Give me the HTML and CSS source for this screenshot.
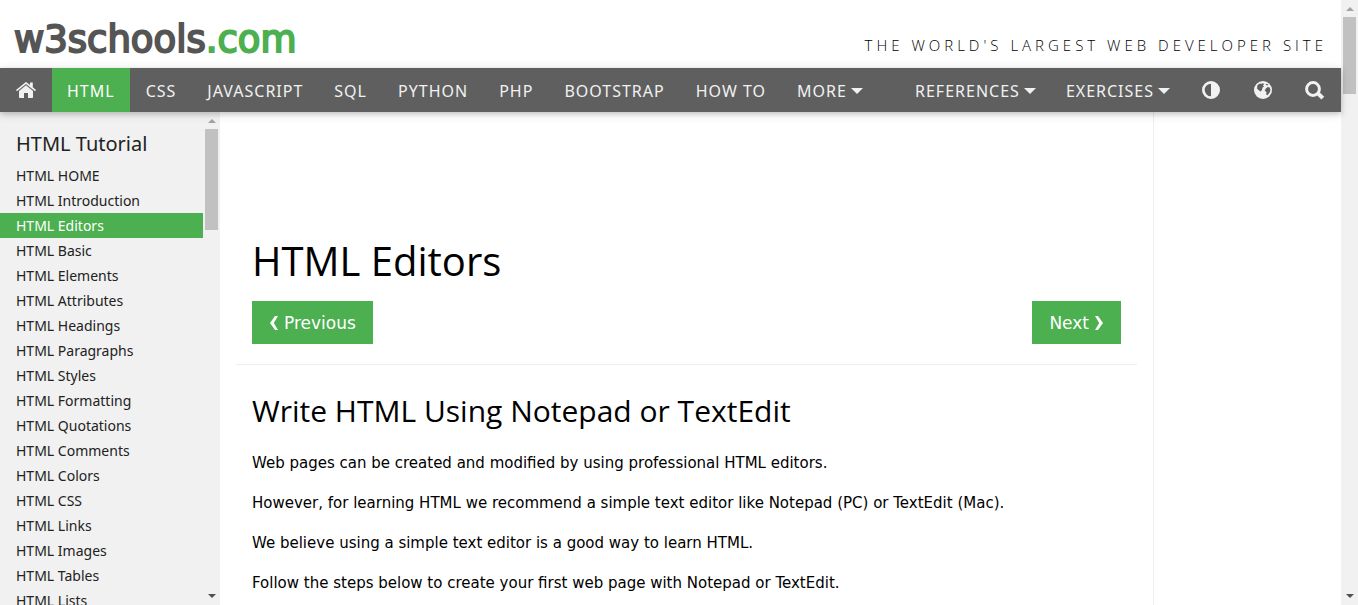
FILE: index.html
```html
<!DOCTYPE html>
<html lang="en">
<head>
<meta charset="utf-8">
<title>HTML Editors</title>
<meta name="viewport" content="width=device-width, initial-scale=1">
<link rel="stylesheet" href="styles.css">
</head>
<body>
<div class="window">
  <div class="page">
    <header class="top">
      <a class="logo" href="#">w3schools<span class="logo-dot">.com</span></a>
      <div class="tagline">THE WORLD'S LARGEST WEB DEVELOPER SITE</div>
    </header>
    <nav class="topnav">
      <a class="nav-icon" href="#" aria-label="Home"><svg width="20" height="16" viewBox="0 0 20 16"><path d="M10 3.200 3 9v6.200q0 .8.8.8H8v-5h4v5h4.200q.8 0 .8-.8V9z"/><path d="M9.200.4q.8-.6 1.600 0L14 3V.6h2.800v4.700L20 8l-1 1.200L10 1.900 1 9.200 0 8z"/></svg></a>
      <a class="active" href="#">HTML</a>
      <a href="#">CSS</a>
      <a href="#">JAVASCRIPT</a>
      <a href="#">SQL</a>
      <a href="#">PYTHON</a>
      <a href="#">PHP</a>
      <a href="#">BOOTSTRAP</a>
      <a href="#">HOW TO</a>
      <a href="#">MORE<span class="caret"></span></a>
      <div class="nav-right">
        <a href="#">REFERENCES<span class="caret"></span></a>
        <a href="#">EXERCISES<span class="caret"></span></a>
        <a class="nav-icon" href="#" aria-label="Contrast"><svg width="18" height="18" viewBox="0 0 18 18"><path fill-rule="evenodd" d="M9 0a9 9 0 1 0 0 18A9 9 0 0 0 9 0zm0 2.700v12.600A6.300 6.300 0 0 1 9 2.700z"/></svg></a>
        <a class="nav-icon" href="#" aria-label="Translate"><svg width="18" height="18" viewBox="0 0 18 18"><circle cx="9" cy="9" r="9"/><path class="land" d="M3.500 4 6 2.400l1.500.7L9 2l1 1.200-1.200 1.600 1.400.6-1.700 1.200L8 9l-1.500 1.600L4.500 9 3 7.500z"/><path class="land" d="m11.800 7.400 2-1.400 1.800.6.900 2.400-.8 2.600-2.300 2.700-1.200-.8.300-2.600-1.800-1.200z"/><path class="land" d="m11.500 3.500 1.500-.8 1.200 1-1.200.9z"/></svg></a>
        <a class="nav-icon" href="#" aria-label="Search"><svg width="20" height="19" viewBox="0 0 20 19"><circle class="lens" cx="8" cy="8" r="6.400"/><path class="lens handle" d="m12.800 12.300 5 4.800"/></svg></a>
      </div>
    </nav>
    <div class="columns">
      <aside class="sidebar">
        <div class="menu">
          <h2>HTML Tutorial</h2>
          <a href="#">HTML HOME</a>
          <a href="#">HTML Introduction</a>
          <a class="active" href="#">HTML Editors</a>
          <a href="#">HTML Basic</a>
          <a href="#">HTML Elements</a>
          <a href="#">HTML Attributes</a>
          <a href="#">HTML Headings</a>
          <a href="#">HTML Paragraphs</a>
          <a href="#">HTML Styles</a>
          <a href="#">HTML Formatting</a>
          <a href="#">HTML Quotations</a>
          <a href="#">HTML Comments</a>
          <a href="#">HTML Colors</a>
          <a href="#">HTML CSS</a>
          <a href="#">HTML Links</a>
          <a href="#">HTML Images</a>
          <a href="#">HTML Tables</a>
          <a href="#">HTML Lists</a>
        </div>
        <div class="scrollbar"><span class="arrow up"></span><span class="thumb side-thumb"></span><span class="arrow down"></span></div>
      </aside>
      <main class="content">
        <section class="intro">
          <h1>HTML Editors</h1>
          <div class="pager">
            <a class="button" href="#"><svg width="9" height="14" viewBox="0 0 9 14"><path d="M6 0h3L4.800 7 9 14H6L1 7z"/></svg>Previous</a>
            <a class="button" href="#">Next<svg width="9" height="14" viewBox="0 0 9 14"><path d="M3 0H0l4.200 7L0 14h3l5-7z"/></svg></a>
          </div>
        </section>
        <hr>
        <section class="lesson">
          <h2>Write HTML Using Notepad or TextEdit</h2>
          <p>Web pages can be created and modified by using professional HTML editors.</p>
          <p>However, for learning HTML we recommend a simple text editor like Notepad (PC) or TextEdit (Mac).</p>
          <p>We believe using a simple text editor is a good way to learn HTML.</p>
          <p>Follow the steps below to create your first web page with Notepad or TextEdit.</p>
        </section>
      </main>
      <aside class="right"></aside>
    </div>
  </div>
  <div class="scrollbar"><span class="arrow up"></span><span class="thumb page-thumb"></span><span class="arrow down"></span></div>
</div>
</body>
</html>
```

FILE: styles.css
```css
* { box-sizing: border-box; }
body {
  margin: 0;
  font-family: "DejaVu Sans", Verdana, sans-serif;
  font-size: 15px;
  color: #000;
  background: #fff;
}
a { color: inherit; text-decoration: none; }
.window { display: flex; height: 100vh; overflow: hidden; }
.page { flex: 1; min-width: 0; display: flex; flex-direction: column; }

.top {
  display: flex;
  justify-content: space-between;
  align-items: flex-end;
  height: 68px;
  flex: none;
  padding: 0 14px 8px;
}
.logo {
  font-size: 37px;
  line-height: 40px;
  color: #555;
  -webkit-text-stroke: 2px currentColor;
}
.logo-dot { color: #4caf50; }
.tagline {
  font-family: "Open Sans", "Segoe UI", sans-serif;
  font-size: 15px;
  font-weight: 300;
  line-height: 30px;
  letter-spacing: 4px;
}

.topnav {
  position: relative;
  z-index: 1;
  display: flex;
  gap: 1px;
  flex: none;
  height: 44px;
  background: #5f5f5f;
  color: #f1f1f1;
  box-shadow: 0 2px 5px rgba(0, 0, 0, .16), 0 2px 10px rgba(0, 0, 0, .12);
  font-family: "Noto Sans", "Segoe UI", sans-serif;
  font-size: 16px;
  letter-spacing: 1px;
}
.topnav a {
  display: flex;
  align-items: center;
  padding: 1px 15px 0;
  white-space: nowrap;
}
.topnav .active { background: #4caf50; color: #fff; }
.topnav .nav-icon { width: 52px; padding: 0; justify-content: center; }
.topnav > .nav-icon { width: 51px; }
.topnav svg { fill: #f1f1f1; }
.topnav .land { fill: #5f5f5f; }
.topnav .lens { fill: none; stroke: #f1f1f1; stroke-width: 3; }
.topnav .handle { stroke-width: 4; }
.nav-right { display: flex; margin-left: auto; }
.caret {
  margin-left: 4px;
  border: 6px solid transparent;
  border-top-color: #f1f1f1;
  border-bottom: 0;
}

.columns { display: flex; flex: 1; min-height: 0; }
.sidebar { display: flex; width: 220px; flex: none; background: #f1f1f1; overflow: hidden; }
.menu {
  flex: 1;
  padding-top: 16px;
  font-family: "Noto Sans", "Segoe UI", sans-serif;
  font-size: 14px;
  color: #222;
}
.menu h2 { margin: 0 0 3px; padding-left: 16px; font-size: 20px; line-height: 32px; font-weight: 400; }
.menu a { display: block; padding: 1px 0 0 16px; line-height: 24px; }
.menu .active { background: #4caf50; color: #fff; }

.scrollbar {
  display: flex;
  flex-direction: column;
  align-items: center;
  width: 17px;
  flex: none;
  background: #f1f1f1;
}
.thumb { width: 13px; background: #c1c1c1; }
.page-thumb { height: 77px; }
.side-thumb { height: 101px; }
.arrow { border: 4px solid transparent; }
.up { margin: 7px 0 6px; border-top: 0; border-bottom-color: #a3a3a3; }
.down { margin: auto 0 7px; border-bottom: 0; border-top-color: #505050; }

.content { flex: 1; padding: 0 16px; overflow: hidden; }
.intro { padding: 117px 16px 20px; }
h1, .lesson h2 { margin: 0; font-family: "Open Sans", "Segoe UI", sans-serif; font-weight: 400; }
h1 { font-size: 40px; line-height: 64px; }
.pager { display: flex; justify-content: space-between; margin-top: 8px; }
.button {
  display: flex;
  align-items: center;
  gap: 6px;
  height: 43px;
  padding: 0 17px;
  background: #4caf50;
  color: #fff;
  font-size: 17px;
}
.button svg { fill: #fff; }
hr { margin: 0; border: 0; border-top: 1px solid #eee; }
.lesson { padding: 22px 16px 0; }
.lesson h2 { font-size: 30px; line-height: 48px; margin-bottom: 16px; }
.lesson p { margin: 0 0 16px; line-height: 24px; }
.right { width: 188px; flex: none; border-left: 1px solid #eee; }
```
